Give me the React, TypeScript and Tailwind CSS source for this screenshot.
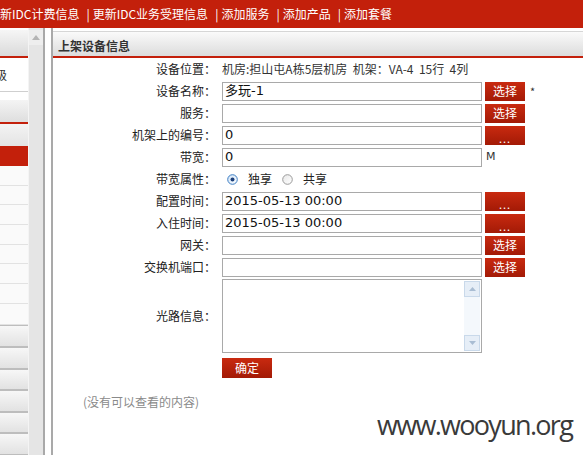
import React from 'react';

const cjk = "font-['Noto_Sans_CJK_SC',sans-serif]";
const mono = "font-['DejaVu_Sans','Noto_Sans_CJK_SC',sans-serif]";

const topLinks = ['更新IDC计费信息', '更新IDC业务受理信息', '添加服务', '添加产品', '添加套餐'];

function Btn({ children }: { children: React.ReactNode }) {
  return (
    <div className="ml-[3px] flex h-[19px] w-[40px] items-center justify-center bg-gradient-to-b from-[#c92a10] to-[#a31a06] text-[12px] leading-none text-white">
      {children}
    </div>
  );
}

function Dots() {
  return <span className="pt-[6px] text-[11px] tracking-[1px]">...</span>;
}

function Field({ value = '' }: { value?: string }) {
  return (
    <div
      className={`flex h-[19px] w-[260px] items-center border border-[#a9a9a9] bg-white pl-[2px] text-[13px] text-[#111] ${mono}`}
    >
      {value}
    </div>
  );
}

function Row({ label, children, h = 'h-[22px]' }: { label: string; children?: React.ReactNode; h?: string }) {
  return (
    <div className={`flex items-center ${h}`}>
      <div className="w-[163px] text-right text-[12px] text-[#222]">{label}：</div>
      <div className="ml-[6px] flex items-center">{children}</div>
    </div>
  );
}

function Radio({ checked }: { checked?: boolean }) {
  return (
    <svg width="11" height="11" viewBox="0 0 11 11">
      <defs>
        <linearGradient id={checked ? 'rc' : 'ru'} x1="0" y1="0" x2="1" y2="1">
          <stop offset="0" stopColor={checked ? '#cfe3f7' : '#e8e8e8'} />
          <stop offset="1" stopColor="#ffffff" />
        </linearGradient>
      </defs>
      <circle cx="5.5" cy="5.5" r="4.8" fill={`url(#${checked ? 'rc' : 'ru'})`} stroke={checked ? '#3f7fc4' : '#9a9a9a'} strokeWidth="1" />
      {checked && <circle cx="5.5" cy="5.5" r="2" fill="#1c3f7a" />}
    </svg>
  );
}

function SideItem({ kind, tall }: { kind: 'plain' | 'grad'; tall?: boolean }) {
  if (kind === 'plain')
    return <div className={`${tall ? 'h-[23px]' : 'h-[21px]'} border-b border-[#e2e2e2] bg-[#fafafa]`} />;
  return <div className="h-[23px] border-y border-[#bdbdbd] bg-gradient-to-b from-[#f7f7f7] to-[#e2e2e2]" />;
}

export default function App() {
  return (
    <div className={`relative h-[455px] w-[583px] overflow-hidden bg-white ${cjk}`}>
      {/* top nav */}
      <div className="flex h-[28px] items-center overflow-hidden bg-[#c3200b] text-[12px] text-white">
        <div className="ml-[-12px] flex items-center whitespace-nowrap">
          {topLinks.map((t, i) => (
            <React.Fragment key={t}>
              {i > 0 && <span className="ml-[7px] mr-[3px]">|</span>}
              <span>{t}</span>
            </React.Fragment>
          ))}
        </div>
      </div>

      <div className="flex h-[427px]">
        {/* left menu */}
        <div className="flex w-[28px] flex-col pt-[2px]">
          <div className="h-[28px] shrink-0 border-b-2 border-[#c3200b] bg-gradient-to-b from-[#f6f6f6] to-[#dadada]" />
          <div className="flex h-[34px] shrink-0 items-center overflow-hidden border-b border-[#cfcfcf] text-[12px] text-[#333]">
            <span className="ml-[-5px]">级</span>
          </div>
          <div className="h-[8px] shrink-0" />
          <div className="h-[24px] shrink-0 border-b-2 border-[#c3200b] bg-gradient-to-b from-[#f4f4f4] to-[#dedede]" />
          <div className="h-[22px] shrink-0 bg-gradient-to-b from-[#f3f3f3] to-[#e4e4e4]" />
          <div className="h-[20px] shrink-0 bg-[#c3200b]" />
          {Array.from({ length: 8 }).map((_, i) => (
            <SideItem key={'p' + i} kind="plain" tall={i === 7} />
          ))}
          {Array.from({ length: 6 }).map((_, i) => (
            <SideItem key={'g' + i} kind="grad" />
          ))}
        </div>

        {/* scroll column */}
        <div className="flex w-[23px] border-l border-[#f4f4f4]">
          <div className="flex w-[14px] flex-col bg-[#e5e5e5]">
            <div className="mt-[2px] flex h-[15px] items-center justify-center bg-[#eeeeee]">
              <svg width="8" height="5" viewBox="0 0 8 5">
                <path d="M0 5 L4 0 L8 5 Z" fill="#b5b5b5" />
              </svg>
            </div>
          </div>
          <div className="w-[2px] bg-[#a9a9a9]" />
          <div className="flex-1 bg-white" />
        </div>

        {/* main panel */}
        <div className="flex flex-1 flex-col border-l-2 border-[#a9a9a9] bg-white pt-[3px]">
          <div className="flex h-[27px] items-center border-b-2 border-t border-b-[#c3200b] border-t-[#d6d6d6] bg-gradient-to-b from-[#fafafa] to-[#dcdcdc] pl-[5px] pt-[3px] text-[12px] font-bold text-[#333]">
            上架设备信息
          </div>

          <div className="flex flex-col">
            <Row label="设备位置">
              <span className="text-[12px] text-[#333]">机房:担山屯A栋5层机房&nbsp; 机架：VA-4&nbsp; 15行&nbsp; 4列</span>
            </Row>
            <Row label="设备名称">
              <Field value="多玩-1" />
              <Btn>选择</Btn>
              <span className="ml-[5px] text-[11px] text-[#333]">*</span>
            </Row>
            <Row label="服务">
              <Field />
              <Btn>选择</Btn>
            </Row>
            <Row label="机架上的编号">
              <Field value="0" />
              <Btn>
                <Dots />
              </Btn>
            </Row>
            <Row label="带宽">
              <Field value="0" />
              <span className={`ml-[4px] text-[11px] text-[#333] ${mono}`}>M</span>
            </Row>
            <Row label="带宽属性">
              <div className="ml-[5px] flex items-center text-[12px] text-[#222]">
                <Radio checked />
                <span className="ml-[10px]">独享</span>
                <span className="ml-[10px] flex">
                  <Radio />
                </span>
                <span className="ml-[10px]">共享</span>
              </div>
            </Row>
            <Row label="配置时间">
              <Field value="2015-05-13 00:00" />
              <Btn>
                <Dots />
              </Btn>
            </Row>
            <Row label="入住时间">
              <Field value="2015-05-13 00:00" />
              <Btn>
                <Dots />
              </Btn>
            </Row>
            <Row label="网关">
              <Field />
              <Btn>选择</Btn>
            </Row>
            <Row label="交换机端口">
              <Field />
              <Btn>选择</Btn>
            </Row>
            <Row label="光路信息" h="h-[76px]">
              <div className="flex h-[74px] w-[260px] justify-end border border-[#a9a9a9] bg-white p-[1px]">
                <div className="flex w-[16px] flex-col justify-between bg-[#f4f8fc]">
                  <div className="flex h-[16px] items-center justify-center border border-[#c9d9ea] bg-[#e6eef7]">
                    <svg width="7" height="4" viewBox="0 0 7 4">
                      <path d="M0 4 L3.5 0 L7 4 Z" fill="#a9bdd3" />
                    </svg>
                  </div>
                  <div className="flex h-[16px] items-center justify-center border border-[#c9d9ea] bg-[#e6eef7]">
                    <svg width="7" height="4" viewBox="0 0 7 4">
                      <path d="M0 0 L3.5 4 L7 0 Z" fill="#a9bdd3" />
                    </svg>
                  </div>
                </div>
              </div>
            </Row>
            <div className="mt-[4px] flex pl-[169px]">
              <div className="flex h-[20px] w-[50px] items-center justify-center bg-gradient-to-b from-[#c92a10] to-[#a31a06] text-[12px] text-white">
                确定
              </div>
            </div>
            <div className="mt-[15px] pl-[30px] text-[12px] text-[#8a8a8a]">(没有可以查看的内容)</div>
          </div>
        </div>
      </div>

      {/* watermark */}
      <div className="absolute left-[377px] top-[411px] font-['Open_Sans',sans-serif] text-[27px] leading-none tracking-[-1.7px] text-[#3a3a3a]">
        www.wooyun.org
      </div>
    </div>
  );
}
